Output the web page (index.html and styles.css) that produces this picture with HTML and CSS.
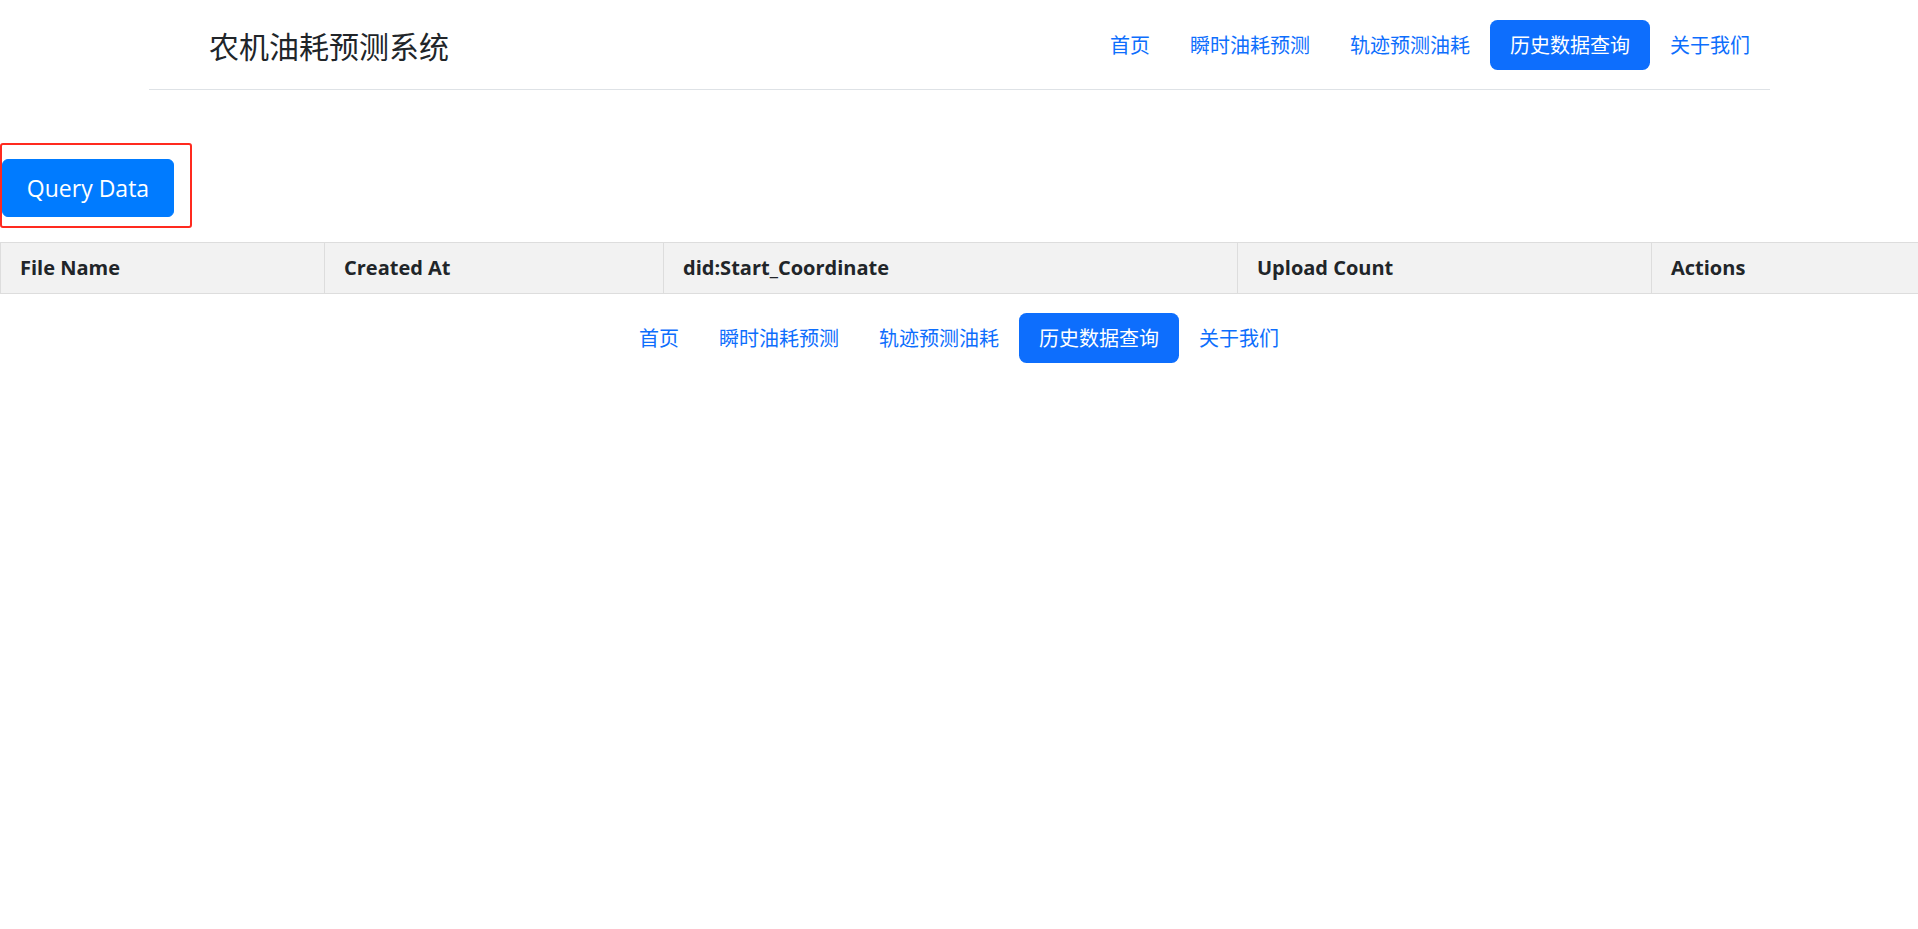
FILE: index.html
```html
<!DOCTYPE html>
<html lang="zh-CN">
<head>
<meta charset="utf-8">
<title>农机油耗预测系统</title>
<link rel="stylesheet" href="styles.css">
</head>
<body>
<header class="site-header">
  <a class="brand" href="#">农机油耗预测系统</a>
  <ul class="nav">
    <li><a class="nav-link" href="#">首页</a></li>
    <li><a class="nav-link" href="#">瞬时油耗预测</a></li>
    <li><a class="nav-link" href="#">轨迹预测油耗</a></li>
    <li><a class="nav-link active" href="#">历史数据查询</a></li>
    <li><a class="nav-link" href="#">关于我们</a></li>
  </ul>
</header>

<main>
  <div class="query-box">
    <button class="btn-query" type="button">Query Data</button>
  </div>

  <table class="data-table">
    <colgroup>
      <col class="c1"><col class="c2"><col class="c3"><col class="c4"><col class="c5">
    </colgroup>
    <thead>
      <tr>
        <th>File Name</th>
        <th>Created At</th>
        <th>did:Start_Coordinate</th>
        <th>Upload Count</th>
        <th>Actions</th>
      </tr>
    </thead>
    <tbody></tbody>
  </table>

  <ul class="nav nav-center">
    <li><a class="nav-link" href="#">首页</a></li>
    <li><a class="nav-link" href="#">瞬时油耗预测</a></li>
    <li><a class="nav-link" href="#">轨迹预测油耗</a></li>
    <li><a class="nav-link active" href="#">历史数据查询</a></li>
    <li><a class="nav-link" href="#">关于我们</a></li>
  </ul>
</main>
</body>
</html>
```

FILE: styles.css
```css
* { box-sizing: border-box; }

body {
  margin: 0;
  font-family: "Open Sans", "Noto Sans CJK SC", sans-serif;
  font-size: 20px;
  line-height: 1.5;
  color: #212529;
  background: #fff;
}

.site-header {
  margin: 0 148px 0 149px;
  padding: 20px 0 19px;
  display: flex;
  align-items: center;
  justify-content: space-between;
  border-bottom: 1px solid #dee2e6;
}

.brand {
  margin-left: 60px;
  font-size: 30px;
  line-height: 1.2;
  color: #212529;
  text-decoration: none;
  font-family: "Noto Sans CJK SC", sans-serif;
}

.nav {
  list-style: none;
  margin: 0;
  padding: 0;
  display: flex;
  font-family: "Noto Sans CJK SC", sans-serif;
}

.nav-link {
  display: block;
  padding: 10px 20px;
  font-size: 20px;
  line-height: 30px;
  color: #0d6efd;
  text-decoration: none;
  border-radius: 7.5px;
}

.nav-link.active {
  background: #0d6efd;
  color: #fff;
}

.query-box {
  margin-top: 53px;
  width: 192px;
  height: 85px;
  border: 2px solid #ff2a1f;
  border-radius: 3px;
  padding: 14px 0 0 0;
}

.btn-query {
  display: block;
  width: 172px;
  height: 58px;
  padding: 0;
  font-family: "Open Sans", sans-serif;
  font-size: 23px;
  line-height: 1.5;
  color: #fff;
  background: #007bff;
  border: 1px solid #007bff;
  border-radius: 6px;
}

.data-table {
  margin-top: 14px;
  width: 100%;
  border-collapse: collapse;
  table-layout: fixed;
}

.c1 { width: 324px; }
.c2 { width: 339px; }
.c3 { width: 574px; }
.c4 { width: 414px; }
.c5 { width: auto; }

.data-table th {
  text-align: left;
  font-weight: 700;
  font-size: 20px;
  padding: 10px 20px 10px 19px;
  line-height: 30px;
  background: #f2f2f2;
  border: 1px solid #ddd;
  color: #212529;
}

.data-table th:last-child {
  border-right: none;
}

.nav-center {
  justify-content: center;
  margin-top: 19px;
}
```
